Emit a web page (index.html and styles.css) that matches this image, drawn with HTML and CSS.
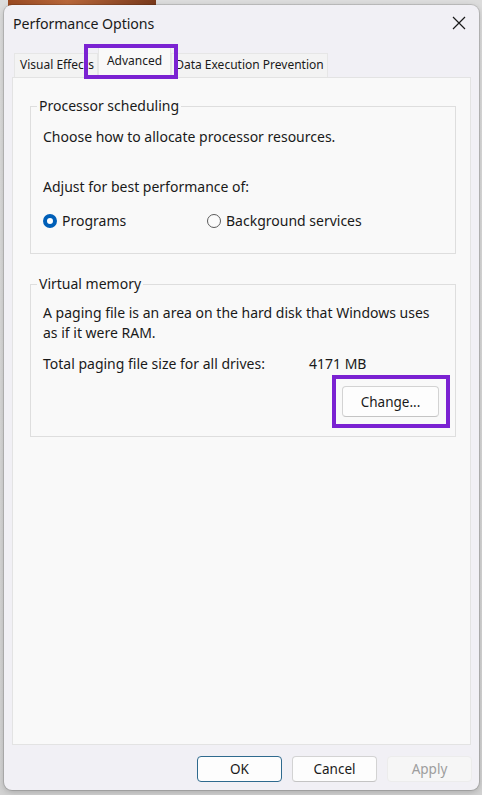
FILE: index.html
```html
<!DOCTYPE html>
<html>
<head>
<meta charset="utf-8">
<link rel="stylesheet" href="styles.css">
</head>
<body>
<div class="dialog">
  <div class="titlebar">
    <span class="title">Performance Options</span>
    <svg class="close" width="14" height="14" viewBox="0 0 14 14"><path d="M1 1 L13 13 M13 1 L1 13" stroke="#1a1a1a" stroke-width="1.2" fill="none"/></svg>
  </div>
  <div class="tabs">
    <div class="tab first">Visual Effects</div>
    <div class="tab active">Advanced</div>
    <div class="tab last">Data Execution Prevention</div>
    <div class="mark mark-tab"></div>
  </div>
  <div class="panel">
    <fieldset class="group group-proc">
      <legend>Processor scheduling</legend>
      <p class="line">Choose how to allocate processor resources.</p>
      <p class="line adjust">Adjust for best performance of:</p>
      <div class="radios">
        <label class="radio"><span class="dot on"></span>Programs</label>
        <label class="radio second"><span class="dot"></span>Background services</label>
      </div>
    </fieldset>
    <fieldset class="group group-vm">
      <legend>Virtual memory</legend>
      <p class="para">A paging file is an area on the hard disk that Windows uses as if it were RAM.</p>
      <div class="total"><span class="total-label">Total paging file size for all drives:</span><span>4171 MB</span></div>
      <div class="change-row">
        <div class="change-wrap">
          <button class="btn change">Change...</button>
          <div class="mark mark-btn"></div>
        </div>
      </div>
    </fieldset>
  </div>
  <div class="footer">
    <button class="btn ok">OK</button>
    <button class="btn">Cancel</button>
    <button class="btn disabled">Apply</button>
  </div>
</div>
</body>
</html>
```
FILE: styles.css
```css
html, body {
  margin: 0;
  padding: 0;
}
body {
  width: 482px;
  height: 795px;
  overflow: hidden;
  background:
    linear-gradient(90deg, #9a4a22 0, #b8673a 40%, #7a3a1c 100%) 8px 0 / 148px 6px no-repeat,
    linear-gradient(180deg, #dcdcdc 0, #d2d2d2 100%);
  font-family: "Noto Sans", "Segoe UI", sans-serif;
  color: #1a1a1a;
}
.dialog {
  margin: 5px 3px 0 4px;
  height: 785px;
  background: #f1f0f5;
  border-radius: 8px;
  box-shadow: 0 0 0 1px rgba(0,0,0,0.12), 0 2px 6px rgba(0,0,0,0.2);
  display: flex;
  flex-direction: column;
  box-sizing: border-box;
}
.titlebar {
  height: 36px;
  display: flex;
  align-items: center;
  justify-content: space-between;
  padding: 0 13px 0 9px;
}
.title {
  font-size: 14.2px;
  letter-spacing: -0.1px;
}
.tabs {
  position: relative;
  height: 36px;
  display: flex;
  align-items: flex-end;
  padding-left: 10px;
  font-size: 12px;
}
.tab {
  height: 24px;
  line-height: 22px;
  padding: 0 3px;
  border: 1px solid #e6e6e6;
  border-bottom: none;
  box-sizing: border-box;
  background: #f3f3f3;
}
.tab.first {
  padding: 0 3px 0 5px;
}
.tab.active {
  line-height: 26px;
  padding: 0 8px 0 8px;
  background: #f9f9f9;
  margin-bottom: -1px;
  height: 31px;
  position: relative;
  z-index: 1;
}
.mark {
  position: absolute;
  border: 4px solid #7b22d2;
  box-sizing: border-box;
  z-index: 2;
}
.mark-tab {
  left: 80px;
  top: 3px;
  width: 94px;
  height: 35px;
}
.panel {
  flex: 1;
  margin: 0 8px 0 8px;
  background: #f9f9f9;
  border: 1px solid #e3e3e3;
  padding: 19px 14px 0 17px;
  display: flex;
  flex-direction: column;
  gap: 21px;
}
.group {
  margin: 0;
  padding: 0 16px 0 12px;
  border: 1px solid #dedede;
  font-size: 14px;
}
.group legend {
  padding: 0 2px;
  margin-left: -6px;
  line-height: 18px;
}
.line {
  margin: 0;
  line-height: 20px;
}
.group-proc .line:first-of-type {
  margin-top: 12px;
}
.adjust {
  margin-top: 30px !important;
}
.radios {
  display: flex;
  margin-top: 14px;
  margin-bottom: 22px;
  line-height: 20px;
}
.radio {
  display: flex;
  align-items: center;
  gap: 5px;
  width: 164px;
}
.dot {
  width: 14px;
  height: 14px;
  border-radius: 50%;
  border: 1px solid #5b5b5b;
  box-sizing: border-box;
  background: #fbfbfb;
}
.dot.on {
  border: 4px solid #005fb8;
  background: #ffffff;
}
.para {
  margin: 10px 0 0;
  line-height: 20px;
}
.total {
  display: flex;
  margin-top: 11px;
  line-height: 20px;
}
.total-label {
  width: 266px;
}
.change-row {
  display: flex;
  justify-content: flex-end;
  margin-top: 12px;
  margin-bottom: 19px;
}
.change-wrap {
  position: relative;
}
.btn {
  font-family: "Noto Sans", "Segoe UI", sans-serif;
  font-size: 13.5px;
  color: #1a1a1a;
  background: #fdfdfd;
  border: 1px solid #d3d3d3;
  border-bottom-color: #c4c4c4;
  border-radius: 4px;
  width: 85px;
  height: 26px;
  padding: 0;
  margin: 0;
}
.change {
  width: 97px;
  height: 31px;
  display: block;
}
.mark-btn {
  left: -10px;
  top: -11px;
  width: 118px;
  height: 53px;
}
.footer {
  display: flex;
  justify-content: flex-end;
  gap: 10px;
  padding: 11px 7px 0 0;
  height: 45px;
  box-sizing: border-box;
}
.btn.ok {
  border: 1px solid #2f6a8e;
}
.btn.disabled {
  color: #9d9d9d;
  background: #f6f6f6;
  border-color: #ececec;
}
```
